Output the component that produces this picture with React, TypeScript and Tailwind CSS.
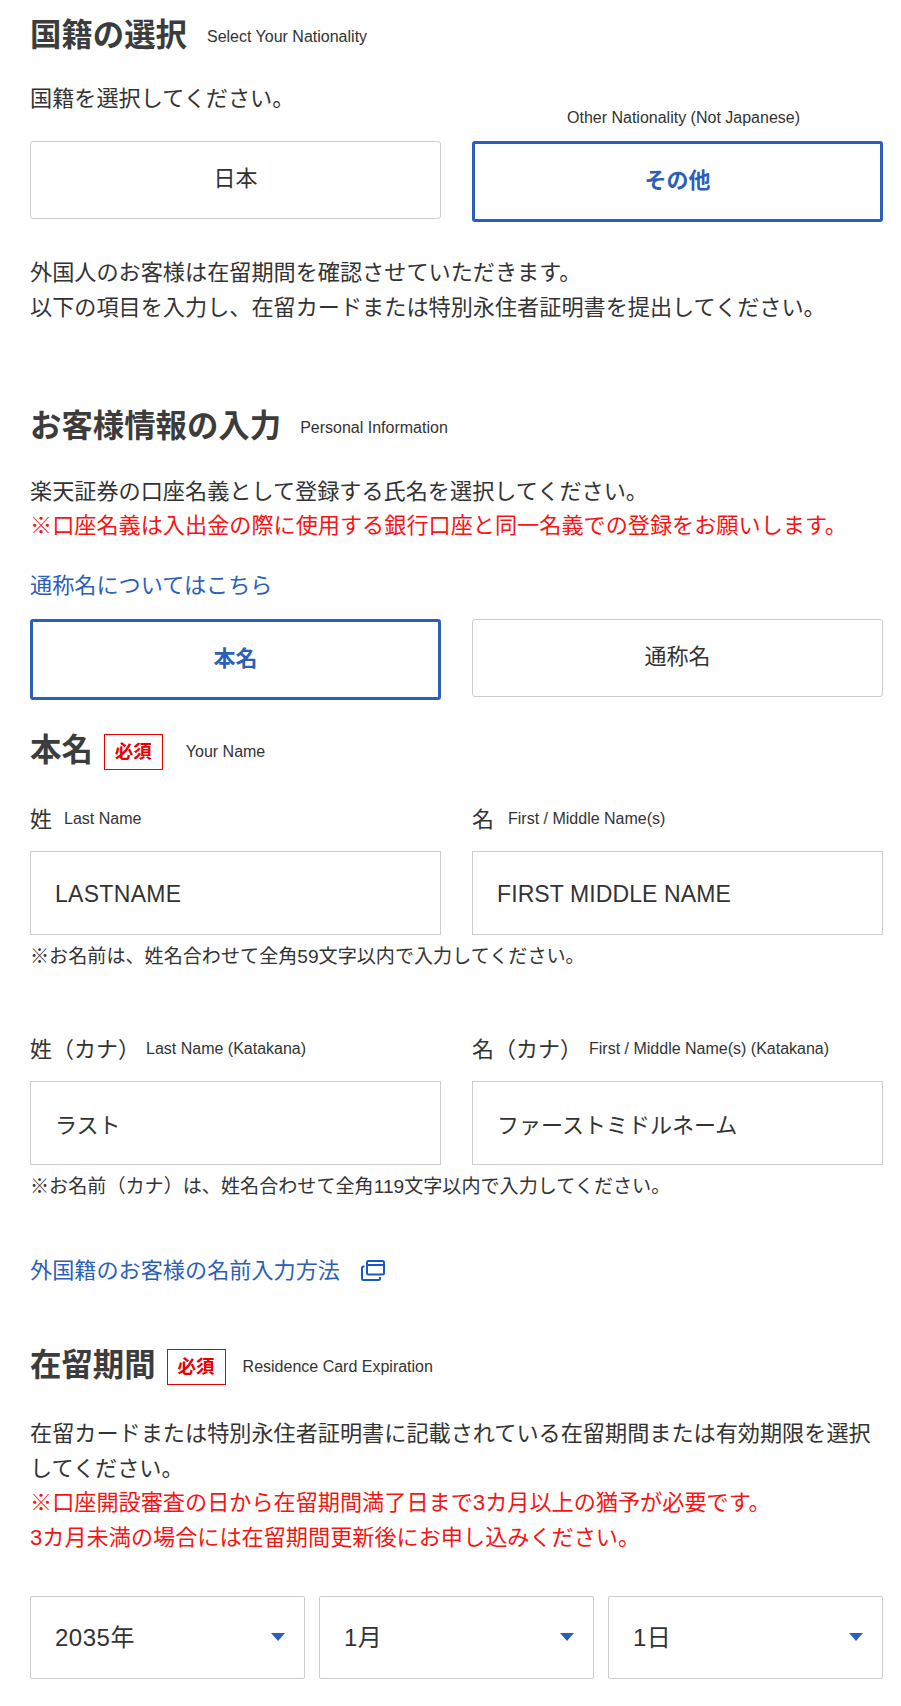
import { useState } from "react";

function Heading({ title, sub, required, subClass }: { title: string; sub: string; required?: boolean; subClass: string }) {
  return (
    <div className="flex items-center h-[40px]">
      <h2 className="text-[31.4px] leading-[36px] mb-[2px] font-semibold text-[#3c3c3c]">{title}</h2>
      {required && (
        <span className="ml-[11px] flex items-center justify-center w-[59px] h-[36px] border border-[#e60000] text-[18.5px] font-semibold text-[#e60000]">
          必須
        </span>
      )}
      <span className={`text-[16px] text-[#333] ${subClass}`}>{sub}</span>
    </div>
  );
}

function Toggle({ label, active, onClick }: { label: string; active: boolean; onClick: () => void }) {
  return (
    <button
      onClick={onClick}
      className={
        active
          ? "block w-full h-[81px] pb-[2px] rounded-[3px] border-[3px] border-[#2d5fb8] text-[22px] font-bold text-[#2d5fb8] bg-white"
          : "block w-full h-[77.5px] pb-[2px] rounded-[3px] border border-[#ccc] text-[22px] text-[#333] bg-white"
      }
    >
      {label}
    </button>
  );
}

function Field({ label, sub, value, subClass, inputClass }: { label: string; sub: string; value: string; subClass: string; inputClass: string }) {
  return (
    <div>
      <label className="flex items-center h-[32px] text-[22px] text-[#333]">
        {label}
        <span className={`text-[16px] ${subClass}`}>{sub}</span>
      </label>
      <input
        readOnly
        value={value}
        className={`mt-[16px] block w-full h-[84px] px-[24px] border border-[#ccc] text-[#333] bg-white outline-none ${inputClass}`}
      />
    </div>
  );
}

function DateSelect({ value }: { value: string }) {
  return (
    <div className="relative">
      <select
        defaultValue={value}
        className="block w-full h-[83px] pl-[24px] pr-[40px] rounded-[2px] border border-[#ccc] text-[24px] tracking-[0.5px] text-[#333] bg-white appearance-none outline-none"
      >
        <option>{value}</option>
      </select>
      <span className="absolute right-[20px] top-[37px] w-0 h-0 border-x-[7px] border-x-transparent border-t-[8px] border-t-[#2d5fb8]" />
    </div>
  );
}

export default function App() {
  const [nationality, setNationality] = useState("other");
  const [nameType, setNameType] = useState("real");

  return (
    <div className="w-[901px] h-[1706px] overflow-hidden bg-white pl-[30px] pr-[18px] pt-[17px] font-['Liberation_Sans','Noto_Sans_CJK_JP',sans-serif] text-[#333]">
      {/* Nationality */}
      <Heading title="国籍の選択" sub="Select Your Nationality" subClass="ml-[20px]" />
      <div className="mt-[24px] h-[60px] grid grid-cols-2 gap-x-[31px]">
        <p className="text-[22.15px] leading-[35px]">国籍を選択してください。</p>
        <p className="pt-[25px] pl-[12px] text-center text-[16px] leading-[24px] whitespace-nowrap">
          Other Nationality (Not Japanese)
        </p>
      </div>
      <div className="grid grid-cols-2 gap-x-[31px] items-start h-[81px]">
        <Toggle label="日本" active={nationality === "japan"} onClick={() => setNationality("japan")} />
        <Toggle label="その他" active={nationality === "other"} onClick={() => setNationality("other")} />
      </div>
      <p className="mt-[34px] text-[22.15px] leading-[34.5px]">
        外国人のお客様は在留期間を確認させていただきます。
        <br />
        以下の項目を入力し、在留カードまたは特別永住者証明書を提出してください。
      </p>

      {/* Personal information */}
      <div className="mt-[83px]">
        <Heading title="お客様情報の入力" sub="Personal Information" subClass="ml-[19px]" />
      </div>
      <p className="mt-[27px] text-[22.15px] leading-[34px]">
        楽天証券の口座名義として登録する氏名を選択してください。
        <br />
        <span className="text-[#f61414]">※口座名義は入出金の際に使用する銀行口座と同一名義での登録をお願いします。</span>
      </p>
      <a className="block mt-[25px] text-[22.15px] leading-[35px] text-[#2d5fb8]">通称名についてはこちら</a>
      <div className="mt-[16px] grid grid-cols-2 gap-x-[31px] items-start h-[81px]">
        <Toggle label="本名" active={nameType === "real"} onClick={() => setNameType("real")} />
        <Toggle label="通称名" active={nameType === "alias"} onClick={() => setNameType("alias")} />
      </div>

      {/* Your name */}
      <div className="mt-[32px]">
        <Heading title="本名" sub="Your Name" required subClass="ml-[23px]" />
      </div>
      <div className="mt-[31px] grid grid-cols-2 gap-x-[31px]">
        <Field label="姓" sub="Last Name" value="LASTNAME" subClass="ml-[12px]" inputClass="pt-[2px] text-[23px] tracking-[0.3px]" />
        <Field label="名" sub="First / Middle Name(s)" value="FIRST MIDDLE NAME" subClass="ml-[14px]" inputClass="pt-[2px] text-[23px] tracking-[0.1px]" />
      </div>
      <p className="mt-[8px] text-[19.1px] leading-[28px]">※お名前は、姓名合わせて全角59文字以内で入力してください。</p>
      <div className="mt-[62px] grid grid-cols-2 gap-x-[31px]">
        <Field label="姓（カナ）" sub="Last Name (Katakana)" value="ラスト" subClass="ml-[6px]" inputClass="text-[22px]" />
        <Field label="名（カナ）" sub="First / Middle Name(s) (Katakana)" value="ファーストミドルネーム" subClass="ml-[7px]" inputClass="text-[22px]" />
      </div>
      <p className="mt-[8px] text-[19.1px] leading-[28px]">※お名前（カナ）は、姓名合わせて全角119文字以内で入力してください。</p>
      <a className="mt-[52px] flex items-center h-[35px] text-[22.15px] text-[#2d5fb8]">
        外国籍のお客様の名前入力方法
        <svg className="ml-[21px]" width="24" height="21" viewBox="0 0 24 21" fill="none" stroke="#1a56c9" strokeWidth="2">
          <rect x="6" y="1" width="17" height="13.5" rx="1.5" />
          <path d="M6 5h17" />
          <path d="M3.5 6.5H2.5A1.5 1.5 0 0 0 1 8v10.5A1.5 1.5 0 0 0 2.5 20h15a1.5 1.5 0 0 0 1.5-1.5V17" />
        </svg>
      </a>

      {/* Residence card */}
      <div className="mt-[59px]">
        <Heading title="在留期間" sub="Residence Card Expiration" required subClass="ml-[17px]" />
      </div>
      <p className="mt-[30px] text-[22.15px] leading-[34.5px]">
        在留カードまたは特別永住者証明書に記載されている在留期間または有効期限を選択してください。
        <br />
        <span className="text-[#f61414]">
          ※口座開設審査の日から在留期間満了日まで3カ月以上の猶予が必要です。
          <br />
          3カ月未満の場合には在留期間更新後にお申し込みください。
        </span>
      </p>
      <div className="mt-[41px] grid grid-cols-3 gap-x-[14px]">
        <DateSelect value="2035年" />
        <DateSelect value="1月" />
        <DateSelect value="1日" />
      </div>
    </div>
  );
}
